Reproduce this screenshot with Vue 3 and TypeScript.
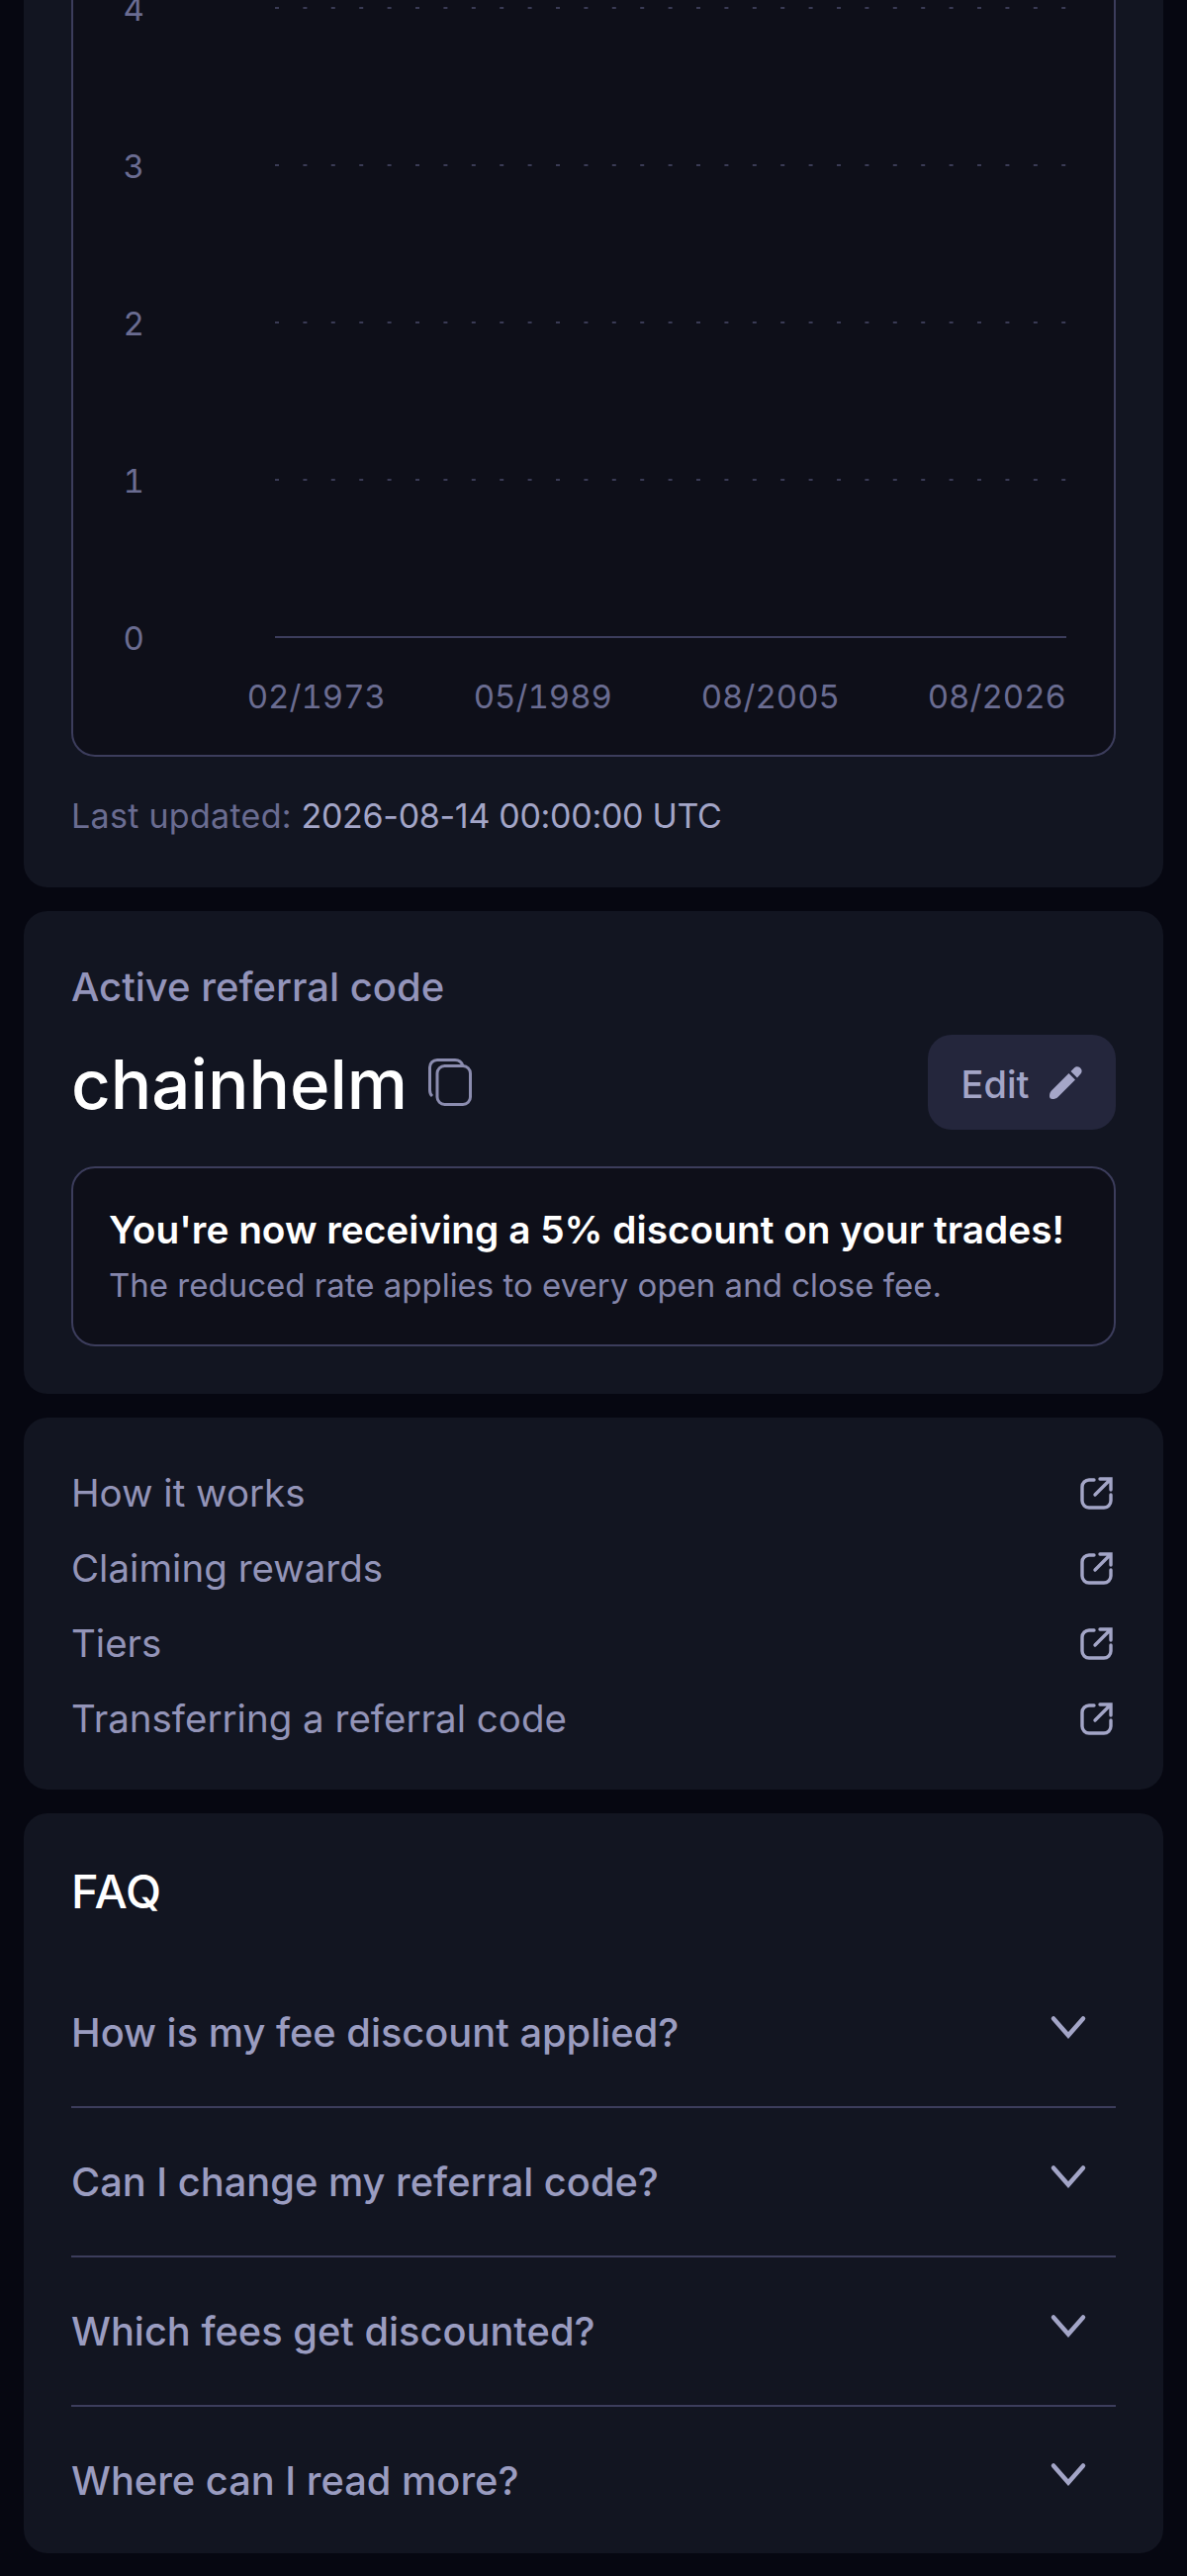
<script setup lang="ts">
const yTicks = [
  { label: '4', y: 58 },
  { label: '3', y: 217 },
  { label: '2', y: 376 },
  { label: '1', y: 535 },
]
const xTicks = [
  { label: '02/1973', x: 316 },
  { label: '05/1989', x: 545 },
  { label: '08/2005', x: 775 },
  { label: '08/2026', x: 1004 },
]
const links = ['How it works', 'Claiming rewards', 'Tiers', 'Transferring a referral code']
const faqs = [
  'How is my fee discount applied?',
  'Can I change my referral code?',
  'Which fees get discounted?',
  'Where can I read more?',
]
</script>

<template>
  <div class="page">
    <section class="card stats">
      <div class="chart">
        <svg class="plot" width="1052" height="813" viewBox="0 0 1052 813">
          <g v-for="t in yTicks" :key="t.label">
            <line x1="204" :y1="t.y" x2="1004" :y2="t.y" class="grid" />
            <text x="72" :y="t.y + 13" text-anchor="end" class="tick">{{ t.label }}</text>
          </g>
          <line x1="204" y1="694" x2="1004" y2="694" class="axis" />
          <text x="72" y="707" text-anchor="end" class="tick">0</text>
          <text v-for="t in xTicks" :key="t.label" :x="t.x" y="766" text-anchor="end" class="tick">{{ t.label }}</text>
        </svg>
      </div>
      <p class="updated"><span class="updated-label">Last updated:</span> <span class="updated-value">2026-08-14 00:00:00 UTC</span></p>
    </section>

    <section class="card code-card">
      <div class="code-label">Active referral code</div>
      <div class="code-row">
        <span class="code">chainhelm</span>
        <svg class="copy" width="44" height="48" viewBox="0 0 44 48" fill="none">
          <path d="M4 38C2.3 36.5 1.5 34.5 1.5 32V9C1.5 4.8 4.8 1.5 9 1.5H27C31 1.5 33.8 3.8 35 7.5" />
          <rect x="9" y="7.5" width="33.5" height="39" rx="7.5" />
        </svg>
        <button class="edit" type="button">
          <span class="edit-text">Edit</span>
          <svg width="33" height="33" viewBox="0 0 33 33">
            <path d="M19.5 7L26 13.5L8.5 31C7 32.5 5 33 3 33C1 33 0 32 0 30C0 28 .5 26 2 24.5Z" />
            <path d="M21.5 5L25 1.5C26.5 0 29 0 30.5 1L31.5 2C33 3.5 33 6 31.5 7.5L28 11.5Z" />
          </svg>
        </button>
      </div>
      <div class="notice">
        <div class="notice-title">You're now receiving a 5% discount on your trades!</div>
        <div class="notice-sub">The reduced rate applies to every open and close fee.</div>
      </div>
    </section>

    <section class="card links">
      <a v-for="l in links" :key="l" class="link">
        <span>{{ l }}</span>
        <svg width="33" height="33" viewBox="0 0 33 33" fill="none">
          <path d="M14 3H9C5.2 3 2 6.2 2 10V24C2 27.8 5.2 31 9 31H24C27.8 31 31 27.8 31 24V18" />
          <path d="M15 18L30.5 2.5M20 2H31V13" />
        </svg>
      </a>
    </section>

    <section class="card faq">
      <h2 class="faq-title">FAQ</h2>
      <div v-for="q in faqs" :key="q" class="faq-row">
        <span>{{ q }}</span>
        <svg class="chev" width="64" height="64" viewBox="0 0 64 64" fill="none">
          <path d="M17 23.5L32 40.5L47 23.5" />
        </svg>
      </div>
    </section>
  </div>
</template>

<style>
html, body { background: #060711; }
</style>

<style scoped>
.page {
  height: 2604px;
  box-sizing: border-box;
  overflow: hidden;
  padding: 0 24px 24px;
  display: flex;
  flex-direction: column;
  gap: 24px;
  background: #060711;
  font-family: Inter, "Noto Sans", sans-serif;
  color: #a3a5c7;
}
.card {
  flex: none;
  background: #121521;
  border-radius: 24px;
  padding: 48px;
}
.stats {
  margin-top: -100px;
  padding-bottom: 48px;
}
.chart {
  background: #0e0f19;
  border: 2px solid #3c3d5c;
  border-radius: 24px;
}
.plot { display: block; }
.grid {
  stroke: #3a3b55;
  stroke-width: 2;
  stroke-dasharray: 4 24.4;
}
.axis {
  stroke: #3c3d5c;
  stroke-width: 2;
}
.tick {
  font-size: 33px;
  font-variant-numeric: tabular-nums;
  fill: #6a6c91;
}
.updated {
  margin: 36px 0 0;
  font-size: 34px;
  line-height: 48px;
}
.updated-label {
  color: #6a6c91;
  letter-spacing: 0.3px;
}
.updated-value {
  color: #a3a5c7;
  letter-spacing: -0.3px;
}
.code-card {
  padding-top: 49px;
}
.code-label {
  font-size: 40px;
  line-height: 56px;
  font-weight: 500;
  color: #9394bb;
}
.code-row {
  display: flex;
  align-items: center;
  margin-top: 20px;
  height: 96px;
}
.code {
  padding-top: 3px;
  font-size: 69px;
  font-weight: 500;
  color: #fff;
}
.copy {
  margin-left: 21px;
  stroke: #8b8caf;
  stroke-width: 3;
}
.edit {
  margin-left: auto;
  width: 190px;
  height: 96px;
  border: 0;
  border-radius: 24px;
  background: #24263c;
  color: #a3a5c7;
  font: 500 38px Inter, "Noto Sans", sans-serif;
  display: flex;
  align-items: center;
  justify-content: center;
  gap: 21px;
}
.edit-text { padding-top: 4px; }
.edit svg { fill: #a5a6c8; }
.notice {
  margin-top: 37px;
  box-sizing: border-box;
  height: 182px;
  padding: 3px 36px 0;
  background: #0e0f19;
  border: 2px solid #3c3d5c;
  border-radius: 24px;
  display: flex;
  flex-direction: column;
  justify-content: center;
}
.notice-title {
  font-size: 38.8px;
  line-height: 54px;
  font-weight: 600;
  color: #fff;
}
.notice-sub {
  font-size: 33px;
  line-height: 58px;
  color: #8586ab;
}
.links {
  padding: 38px 48px 34px;
}
.link {
  height: 76px;
  display: flex;
  align-items: center;
  justify-content: space-between;
  font-size: 38.5px;
  color: #9394b8;
}
.link svg {
  margin-right: 3px;
  stroke: #a3a5c7;
  stroke-width: 3.4;
  stroke-linecap: round;
}
.faq {
  padding: 48px 48px 0;
}
.faq-title {
  margin: 0 0 37px;
  font-size: 47px;
  line-height: 62px;
  font-weight: 500;
  color: #fff;
}
.faq-row {
  box-sizing: border-box;
  height: 151px;
  display: flex;
  align-items: center;
  justify-content: space-between;
  font-size: 39.8px;
  font-weight: 500;
  color: #9a9cc0;
  border-bottom: 2px solid #3c3d5c;
}
.faq-row:last-child {
  height: 148px;
  border-bottom: 0;
}
.chev {
  margin: 0 16px 12px 0;
  stroke: #a3a5c7;
  stroke-width: 4.5;
  stroke-linecap: round;
}
</style>
